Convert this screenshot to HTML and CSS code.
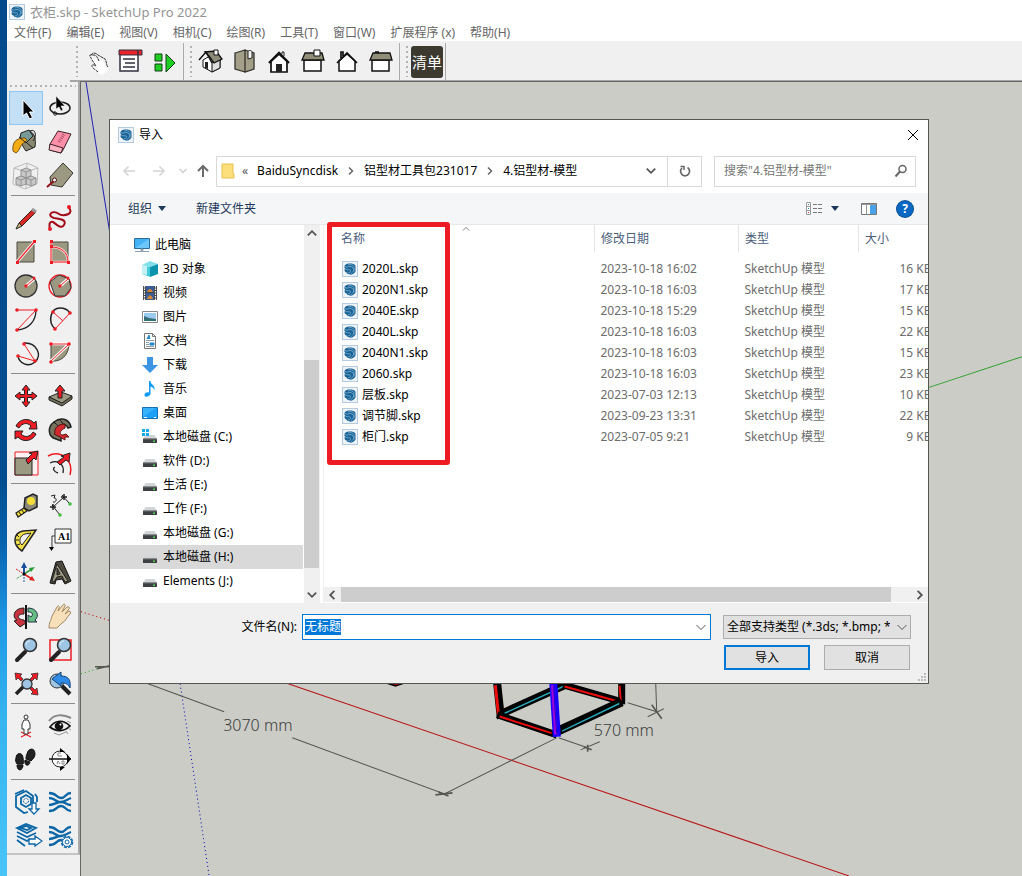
FILE: index.html
```html
<!DOCTYPE html>
<html lang="zh-CN">
<head>
<meta charset="utf-8">
<title>衣柜.skp - SketchUp Pro 2022</title>
<link rel="stylesheet" href="styles.css">
</head>
<body>
<svg class="sprite" aria-hidden="true">
  <symbol id="skp" viewBox="0 0 16 16">
    <rect x=".5" y=".5" width="15" height="15" fill="#eef3f8" stroke="#b5cbdf"/>
    <path d="M2.500 5C3 3 6 2.500 8 2.500s5 .5 5.500 2.500v5.500c-1 2-3 3-5 3.300C7 13 5 13 4.500 11.500 3 11 2.500 10 2.500 8.500l1-.5-1-1z" fill="#1a6396"/>
    <path d="M3 5.500c3 2 4-1.500 7 .5s1.500 5-1.500 7M3.500 8.200c3 1.600 4.500-.4 5 1.300s-1 2-2.500 2.500M6 4c2-.8 5-.6 6 1.500v5" fill="none" stroke="#7fb2d3" stroke-width=".8"/>
  </symbol>
  <symbol id="drive" viewBox="0 0 16 16">
    <path d="M3.500 6h9l2.500 4H1z" fill="#d3d6d8"/><rect x="1" y="9.500" width="14" height="4.500" rx=".6" fill="#3d4042"/><path d="M1 9.800h14" stroke="#8a8c8e"/><rect x="11" y="11.500" width="2" height="1.300" fill="#5be35b"/>
  </symbol>
  <symbol id="chev" viewBox="0 0 10 10"><path d="M1.500 3 5 6.500 8.500 3" fill="none" stroke="currentColor" stroke-width="1.500"/></symbol>
  <symbol id="thin" viewBox="0 0 12 12"><path d="m1.500 4 4.500 4.500L10.500 4" fill="none" stroke="currentColor"/></symbol>
</svg>

<div class="desktop">
<div class="app">
  <header class="titlebar"><svg class="i16"><use href="#skp"/></svg><span>衣柜.skp - SketchUp Pro 2022</span></header>
  <nav class="menubar">
    <button>文件(F)</button><button>编辑(E)</button><button>视图(V)</button><button>相机(C)</button><button>绘图(R)</button><button>工具(T)</button><button>窗口(W)</button><button>扩展程序 (x)</button><button>帮助(H)</button>
  </nav>

  <div class="toolbar">
    <div class="toolgroup">
      <i class="grip"></i>
      <button class="tool" aria-label="手势"><svg viewBox="0 0 34 34"><path d="m15 27-4-3c-2-2-1-4 1-3l2 1-4-9c-1-3 1-3 2-1l3 5-1-3c1-2 3-1 3 1 1-2 3-1 3 1 1-1 3 0 3 2l4 7-6 5z" fill="#fff"/><path d="m17 27-5-4c-2-2-1-4 1-3l2 1-4-6c-1-3-3-4-2-5l5 0c2 1 3 4 4 6M10 10c2-3 5-2 7 0l7 4c2 3 1 6 3 8" fill="none" stroke="#333" stroke-dasharray="3 .6"/></svg></button>
      <button class="tool" aria-label="清单窗口"><svg viewBox="0 0 34 34"><rect x="5" y="6" width="18" height="20" fill="#fff" stroke="#32303e" stroke-width="1.500"/><path d="M4 5h23v5H4z" fill="#e8232b" stroke="#32303e"/><path d="M23 5v5M8 14h12M10 18h10M8 22h12" stroke="#32303e" stroke-width="1.500"/></svg></button>
      <button class="tool" aria-label="运行"><svg viewBox="0 0 34 34"><path d="M6 9h7v7H6zM6 19h7v7H6zM17 9l9 9-9 9z" fill="#1fce23" stroke="#14401a"/></svg></button>
    </div>
    <div class="toolgroup">
      <i class="grip"></i>
      <button class="tool" aria-label="等轴"><svg viewBox="0 0 34 34"><path d="M8 15v7l9 5 8-4v-9l-5-6z" fill="#fff" stroke="#111"/><path d="m17 17 8-3v9l-8 4z" fill="#ddd" stroke="#111"/><path d="m10 7 11-1 6 8-8 4-5-7z" fill="#8d8a77" stroke="#111" stroke-width="1.300"/><path d="m4 15 7-8 6 11" fill="none" stroke="#111" stroke-width="1.500"/><path d="M19 5h4v5h-4z" fill="#fff" stroke="#111"/><path d="M10 17h3v7l-3-1z" fill="#222"/></svg></button>
      <button class="tool" aria-label="俯视图"><svg viewBox="0 0 34 34"><path d="m6 8 10-3v22L6 24zM16 5l9 3v16l-9 3z" fill="#a39f89" stroke="#34332b" stroke-width="1.300"/><path d="M19 7c0-2 4-2 4 0v6l-4 1z" fill="#f4f4f4" stroke="#222"/></svg></button>
      <button class="tool" aria-label="前视图"><svg viewBox="0 0 34 34"><path d="M8 16v11h16V16l-8-7z" fill="#fff" stroke="#111" stroke-width="1.700"/><path d="M6 18 16 8l10 10" fill="none" stroke="#111" stroke-width="2.300"/><path d="M13 19h6v8h-6z" fill="#222"/><path d="M19 9V7h2v4" fill="none" stroke="#222"/></svg></button>
      <button class="tool" aria-label="右视图"><svg viewBox="0 0 34 34"><path d="M7 15h17v11H7z" fill="#fff" stroke="#111" stroke-width="1.500"/><path d="M8 8h17l2 7H5z" fill="#908d79" stroke="#111" stroke-width="1.300"/><path d="M17 5h6v6h-6z" fill="#fff" stroke="#111"/></svg></button>
      <button class="tool" aria-label="后视图"><svg viewBox="0 0 34 34"><path d="M8 16v10h16V16l-8-7z" fill="#fff" stroke="#111" stroke-width="1.500"/><path d="M6 18 16 8l10 10M10 13V7h2v4" fill="none" stroke="#111" stroke-width="1.700"/></svg></button>
      <button class="tool" aria-label="左视图"><svg viewBox="0 0 34 34"><path d="M7 15h17v11H7z" fill="#fff" stroke="#111" stroke-width="1.500"/><path d="M8 8h17l2 7H5zM10 7h4" fill="#908d79" stroke="#111" stroke-width="1.300"/></svg></button>
    </div>
    <div class="toolgroup last"><i class="grip"></i><button class="listbtn">清单</button></div>
  </div>

  <div class="workspace">
    <aside class="palette">
      <i class="hgrip"></i>
      <div class="tools">
        <button class="tool active" aria-label="选择"><svg viewBox="0 0 34 34"><path d="M14 9v16l3.500-3 3 6 3-1.500-3-5.500H25z" fill="#000" stroke="#fff"/></svg></button>
        <button class="tool" aria-label="套索"><svg viewBox="0 0 34 34"><ellipse cx="17" cy="17" rx="10" ry="6" fill="none" stroke="#222" stroke-width="1.500"/><path d="M10 22c3-3 5 1 3 2s-4-2-1-3" fill="none" stroke="#222"/><path d="M13 5v13l3-2 2 4 2-1-2-4h4z" fill="#000" stroke="#eee" stroke-width=".6"/></svg></button>
        <button class="tool" aria-label="材质"><svg viewBox="0 0 34 34"><path d="m12 9 9-3c5 3 6 8 5 16l-9 4c-4-5-6-11-5-17z" fill="#8a8873" stroke="#222"/><path d="m12 8 8-3 4 6-7 7-6-5z" fill="#779997" stroke="#222"/><path d="M21 6c6-3 7 6 3 10" fill="none" stroke="#222"/><path d="M4 26c-1-9 3-13 12-13 2 1 2 3 0 4-5 2-5 9-9 11z" fill="#f4ac16" stroke="#7a5510"/><path d="m18 18 6 5M10 12l6 5" stroke="#222"/></svg></button>
        <button class="tool" aria-label="擦除"><svg viewBox="0 0 34 34"><path d="m7 19 8-13 13 3-8 16-2 3-11-3z" fill="#ff8fa8" stroke="#382027"/><path d="m7 19 13 4-2 5-12-3z" fill="#ffb4c4" stroke="#382027"/><path d="m16 17 5-8" stroke="#a8566b" stroke-width="3" stroke-dasharray="1 1"/></svg></button>
        <button class="tool" aria-label="组件"><svg viewBox="0 0 34 34"><path d="m5 9 13-5 11 5-1 16-12 5-12-5zM5 9l12 4 12-4M17 13v17M18 4v16" fill="none" stroke="#bbb"/><g fill="#c8c8c8" stroke="#949494"><path d="m12 11 5-2 5 2v6l-5 2-5-2zM7 19l5-2 5 2v6l-5 2-5-2zM17 19l5-2 5 2v6l-5 2-5-2z"/><path d="m12 11 5 2 5-2M17 13v5M7 19l5 2 5-2M12 21v6M17 19l5 2 5-2M22 21v6" fill="none"/></g></svg></button>
        <button class="tool" aria-label="标记"><svg viewBox="0 0 34 34"><path d="m7 18 13-14 10 10-11 14-11-2z" fill="#9c9983" stroke="#3a382e"/><path d="m4 28 8-7" stroke="#8f1018" stroke-width="2"/><circle cx="11.500" cy="21" r="2" fill="#fff" stroke="#5a1015"/></svg></button>
      </div>
      <hr>
      <div class="tools">
        <button class="tool" aria-label="直线"><svg viewBox="0 0 34 34"><path d="m10 22 14-14 3 3-14 14z" fill="#d52a24" stroke="#372320"/><path d="m23 8 4 3" stroke="#999" stroke-width="3"/><path d="m10 22 3 3-6 3z" fill="#cdb77b" stroke="#222"/></svg></button>
        <button class="tool" aria-label="手绘线"><svg viewBox="0 0 34 34"><path d="M25 6c8 7-5 10-9 7C9 8 3 15 11 17c7 1 13 2 10 7s-9-2-11-3c-4-1-4 3-3 7" fill="none" stroke="#a30c19" stroke-width="2"/><circle cx="26" cy="6" r="2" fill="#ed1c24"/><circle cx="7" cy="28" r="2" fill="#ed1c24"/></svg></button>
        <button class="tool" aria-label="矩形"><svg viewBox="0 0 34 34"><path d="M8 7h17v20H8z" fill="#9c9983" stroke="#4b493d"/><path d="M8 27 25 7" stroke="#fff" stroke-width="3"/><path d="M8 27 25 7" stroke="#ed1c24" stroke-width="1.300"/><path d="M7 26h3v3H7zM24 5h3v3h-3z" fill="#ed1c24"/></svg></button>
        <button class="tool" aria-label="旋转矩形"><svg viewBox="0 0 34 34"><path d="M8 7h17v20H8z" fill="#9c9983" stroke="#4b493d"/><path d="M8 12c10 0 17 5 17 15H8V6" fill="none" stroke="#ffd9d9" stroke-width="2.500"/><path d="M8 12c10 0 17 5 17 15H8V6" fill="none" stroke="#ed1c24"/><path d="M7 5h3v3H7zM7 10h3v3H7zM7 26h3v3H7zM24 26h3v3h-3z" fill="#ed1c24"/></svg></button>
        <button class="tool" aria-label="圆"><svg viewBox="0 0 34 34"><circle cx="17" cy="17" r="11" fill="#9c9983" stroke="#333" stroke-width="1.300"/><path d="m17 17 8-7" stroke="#fff" stroke-width="3"/><path d="m17 17 8-7" stroke="#ed1c24"/><circle cx="17" cy="17" r="1.700" fill="#ed1c24"/><circle cx="25" cy="9" r="1.500" fill="#ed1c24"/></svg></button>
        <button class="tool" aria-label="多边形"><svg viewBox="0 0 34 34"><circle cx="17" cy="17" r="11" fill="none" stroke="#ed1c24" stroke-width="1.300"/><path d="m7 13 9-7 10 4 2 9-6 8H12z" fill="#9c9983" stroke="#333"/><path d="m17 17 8-7" stroke="#fff" stroke-width="3"/><path d="m17 17 8-7" stroke="#ed1c24"/><circle cx="17" cy="17" r="1.700" fill="#ed1c24"/><circle cx="25" cy="9" r="1.500" fill="#ed1c24"/></svg></button>
        <button class="tool" aria-label="圆弧"><svg viewBox="0 0 34 34"><path d="M27 7c0 11-7 19-19 20" fill="none" stroke="#222" stroke-width="1.300"/><path d="M8 7h19L8 27" fill="none" stroke="#ed1c24"/><g fill="#ed1c24"><circle cx="8" cy="7" r="1.800"/><circle cx="27" cy="7" r="1.800"/><circle cx="8" cy="27" r="1.800"/></g></svg></button>
        <button class="tool" aria-label="两点圆弧"><svg viewBox="0 0 34 34"><path d="M12 26C4 18 8 5 17 5c5 0 8 2 10 5" fill="none" stroke="#222" stroke-width="1.500"/><path d="m12 26 15-16M10 9l10 9" stroke="#ed1c24"/><g fill="#ed1c24"><circle cx="12" cy="26" r="1.800"/><circle cx="27" cy="10" r="1.800"/><circle cx="10" cy="9" r="1.800"/></g></svg></button>
        <button class="tool" aria-label="三点圆弧"><svg viewBox="0 0 34 34"><path d="M15 6c12-1 19 12 11 19-7 6-16 1-17-6" fill="none" stroke="#222" stroke-width="1.500"/><path d="m15 7 11 17-17-5" fill="none" stroke="#ed1c24"/><g fill="#ed1c24"><circle cx="15" cy="7" r="1.800"/><circle cx="26" cy="24" r="1.800"/><circle cx="9" cy="19" r="1.800"/></g></svg></button>
        <button class="tool" aria-label="扇形"><svg viewBox="0 0 34 34"><path d="M8 8h18c-1 11-8 17-18 16z" fill="#9c9983" stroke="#4b493d"/><path d="M8 7h18L8 24" fill="none" stroke="#fff" stroke-width="3"/><path d="M8 7h18L8 24" fill="none" stroke="#ed1c24"/><g fill="#ed1c24"><circle cx="8" cy="7" r="1.800"/><circle cx="26" cy="7" r="1.800"/><circle cx="8" cy="25" r="1.800"/></g></svg></button>
      </div>
      <hr>
      <div class="tools">
        <button class="tool" aria-label="移动"><svg viewBox="0 0 34 34"><path d="m17 6 4 5h-2.500v4.500H23V13l5 4-5 4v-2.500h-4.500V23H21l-4 5-4-5h2.500v-4.500H11V21l-5-4 5-4v2.500h4.500V11H13z" fill="#ed1c24" stroke="#222"/></svg></button>
        <button class="tool" aria-label="推拉"><svg viewBox="0 0 34 34"><path d="m6 18 12-5 11 4-10 8z" fill="#9c9983" stroke="#222"/><path d="m6 18 13 6 10-7v3l-10 7-13-6z" fill="#6f6c59" stroke="#222"/><path d="m17 6 5 6h-3v7h-4v-7h-3z" fill="#ed1c24" stroke="#222"/></svg></button>
        <button class="tool" aria-label="旋转"><svg viewBox="0 0 34 34"><path d="M7 13c3-7 13-9 18-3l2-2 1 8-8 0 2-3c-4-4-9-3-12 2zM27 21c-3 7-13 9-18 3l-3 2V18h8l-2 3c4 4 9 3 12-2z" fill="#ed1c24" stroke="#222"/></svg></button>
        <button class="tool" aria-label="路径跟随"><svg viewBox="0 0 34 34"><path d="M28 14C26 5 17 4 11 9c-7 5-6 15 2 17l5 2v-5c-7 0-7-6-2-10 4-3 8-1 9 2z" fill="#76745f" stroke="#222" stroke-width="1.500"/><path d="M10 9c3 1 5 4 6 5M16 6c2 2 4 4 4 6" stroke="#111" fill="none"/><path d="M22 11c-7 0-11 4-10 9l-1 1 6 3 5 3v-3h4l-3-3-3 1c-4 0-4-4 2-7z" fill="#d62a2f" stroke="#5a1717"/></svg></button>
        <button class="tool" aria-label="缩放"><svg viewBox="0 0 34 34"><path d="M6 5h23v23H6z" fill="#fff1f1" stroke="#ed1c24"/><path d="M6 11h17v17H6z" fill="#9c9983" stroke="#222"/><path d="m17 13 6-6-3-1 9-2-2 9-2-2-6 6z" fill="#ed1c24" stroke="#222"/></svg></button>
        <button class="tool" aria-label="偏移"><svg viewBox="0 0 34 34"><path d="M5 9c13-7 26 5 22 19" fill="none" stroke="#ed1c24" stroke-width="1.500"/><path d="M7 16c8-4 15 2 13 10M12 20c-3 1-1 5 3 6" fill="none" stroke="#222" stroke-width="1.300"/><path d="m14 15 7-5-3-1 9-3-1 9-3-2-6 5z" fill="#ed1c24" stroke="#222"/></svg></button>
      </div>
      <hr>
      <div class="tools">
        <button class="tool" aria-label="卷尺"><svg viewBox="0 0 34 34"><path d="m16 9 8-4 4 2v11l-8 4-5-3z" fill="#8a8878" stroke="#222" stroke-width="1.500"/><circle cx="22" cy="12" r="4" fill="#f2dc35"/><path d="m7 24 8-5 3 3-9 6z" fill="#f2dc35" stroke="#222" stroke-width="1.300"/><path d="m10 23 2 3m1-5 2 3" stroke="#222"/></svg></button>
        <button class="tool" aria-label="尺寸"><svg viewBox="0 0 34 34"><path d="m10 18 11-10M9 16l8 10M19 6l7 8" stroke="#222"/><path d="M7 18h6M10 15v6M18 8h6M21 5v6" stroke="#222" stroke-width="1.500"/><circle cx="17" cy="26" r="1.700" fill="#42bb3a"/><circle cx="27" cy="15" r="1.700" fill="#42bb3a"/><path d="m8 7 4-1-1 3c4 0 2 5-1 4" fill="none" stroke="#222"/></svg></button>
        <button class="tool" aria-label="量角器"><svg viewBox="0 0 34 34"><path d="M13 28C3 22 4 10 14 8l13-1z" fill="#f1df48" stroke="#222" stroke-width="1.500"/><path d="M13 22c-4-3-2-10 3-11l6-1z" fill="#f0f0f0" stroke="#222"/><path d="m8 12 2 2M7 17h3M8 22l3-1" stroke="#222"/></svg></button>
        <button class="tool" aria-label="文字"><svg viewBox="0 0 34 34"><path d="M12 6h16v14H12zM12 13H9v13" fill="#fff" stroke="#333"/><path d="m6 24h5l-2.500 4z"/><text x="15" y="17" class="serif">A1</text></svg></button>
        <button class="tool" aria-label="轴"><svg viewBox="0 0 34 34"><path d="m15 17-8 5" stroke="#3b9a44" stroke-dasharray="2 1"/><path d="m15 17 8-5" stroke="#3b9a44" stroke-width="1.500"/><path d="m7 12 8 5" stroke="#d22" stroke-dasharray="2 1"/><path d="m15 17 8 5" stroke="#d22" stroke-width="1.500"/><path d="M15 17V8" stroke="#1c4f9c" stroke-width="2"/><path d="M15 17v9" stroke="#8aa6cf" stroke-dasharray="2 1" stroke-width="2"/><path d="m15 5 3 6h-6z" fill="#1c4f9c"/><path d="m26 10-6 1 2 4z" fill="#2b9a34"/><path d="m26 24-6-1 3-4z" fill="#d22"/><circle cx="15" cy="17" r="1.500"/></svg></button>
        <button class="tool" aria-label="三维文字"><svg viewBox="0 0 34 34"><path d="m13 5 6-1 9 20-6 3-3-5-6 1-1 4-5-1z" fill="#4d4a41" stroke="#111"/><path d="m14 7-5 17 2 1 3-5 5-1 3 6 3-1zM14 11l3 6-3 1z" fill="#9c9983" stroke="#222" fill-rule="evenodd"/></svg></button>
      </div>
      <hr>
      <div class="tools">
        <button class="tool" aria-label="环绕观察"><svg viewBox="0 0 34 34"><path d="M15 9C4 9 3 19 8 21l-3 1 6 6 6-4-2-3c-8-1-7-6 0-6z" fill="#c7343f" stroke="#222"/><path d="M19 9c9 0 12 8 7 12l2 2h-9v-7l3 2c3-3 1-5-3-5z" fill="#67bd83" stroke="#234"/><path d="M17 6v24" stroke="#111" stroke-width="2"/></svg></button>
        <button class="tool" aria-label="平移"><svg viewBox="0 0 34 34"><path d="M6 29c0-6 2-7 3-12l5-9c1-2 3-1 2 1l-1 3 5-6c1-2 3 0 2 1l-3 6 5-5c2-1 3 1 2 2l-4 5 4-3c2 0 2 2 1 3-4 4-4 7-8 9l-5 5z" fill="#f7dfba" stroke="#a08a64"/></svg></button>
        <button class="tool" aria-label="缩放视图"><svg viewBox="0 0 34 34"><path d="m8 27 8-8" stroke="#222" stroke-width="4" stroke-linecap="round"/><circle cx="21" cy="12" r="6.500" fill="#9fc5e4" stroke="#333" stroke-width="1.500"/><path d="M17 12c0-3 2-4 4-4" stroke="#e4f2fb" fill="none"/></svg></button>
        <button class="tool" aria-label="缩放窗口"><svg viewBox="0 0 34 34"><path d="M7 7h21v20H7z" fill="none" stroke="#ed1c24" stroke-width="1.500"/><path d="m8 27 8-8" stroke="#222" stroke-width="4" stroke-linecap="round"/><circle cx="21" cy="12" r="6.500" fill="#9fc5e4" stroke="#333" stroke-width="1.500"/><path d="M17 12c0-3 2-4 4-4" stroke="#e4f2fb" fill="none"/></svg></button>
        <button class="tool" aria-label="充满视窗"><svg viewBox="0 0 34 34"><path d="m7 27 8-8" stroke="#222" stroke-width="3.500"/><circle cx="18" cy="17" r="5" fill="#9fc5e4" stroke="#333" stroke-width="1.300"/><g fill="#ed1c24" stroke="#222" stroke-width=".7"><path d="m6 6 7 1-2 2 3 3-2 2-3-3-2 2zM29 6l-7 1 2 2-3 3 2 2 3-3 2 2zM29 28l-7-1 2-2-3-3 2-2 3 3 2-2z"/></g></svg></button>
        <button class="tool" aria-label="上一个"><svg viewBox="0 0 34 34"><circle cx="14" cy="14" r="7" fill="#9fc5e4" stroke="#333"/><path d="m19 19 8 8" stroke="#222" stroke-width="4"/><path d="m9 12 9-7v4c7 0 10 3 9 12-2-4-4-5-9-5v3z" fill="#2f8be6" stroke="#174375"/></svg></button>
      </div>
      <hr>
      <div class="tools">
        <button class="tool" aria-label="定位相机"><svg viewBox="0 0 34 34"><path d="m12 28 10-5M12 23l10 5" stroke="#ed1c24" stroke-width="1.200"/><circle cx="17" cy="8" r="2" fill="#fff" stroke="#333"/><path d="M15 11h4l2 4v5h-2v5h-4v-5h-2v-5z" fill="#fff" stroke="#333"/></svg></button>
        <button class="tool" aria-label="绕轴旋转"><svg viewBox="0 0 34 34"><path d="M6 12c5-7 14-7 22-3" fill="none" stroke="#888" stroke-width="2"/><path d="M7 18c6-8 14-7 20-1-6 6-14 6-20 1z" fill="#eee" stroke="#111" stroke-width="1.700"/><circle cx="16" cy="17" r="4.300" fill="#111"/><circle cx="17.500" cy="15.500" r="1" fill="#fff"/><path d="m11 24 5 2 7-3M24 12l4 2m-3 5 3 2m-5 1 2 3" stroke="#999" fill="none"/></svg></button>
        <button class="tool" aria-label="漫游"><svg viewBox="0 0 34 34"><path d="M7 15c0-6 7-6 7 0 1 4 1 5 0 6H8c-1-2-2-3-1-6zM18 11c1-6 8-7 8 0 0 3-2 5-4 7l-5-2c0-2 0-3 1-5zM8 22h6c0 6-6 7-6 0zM16 17l5 2c-1 5-6 4-5-2z" fill="#222" stroke="#111"/></svg></button>
        <button class="tool" aria-label="剖切面"><svg viewBox="0 0 34 34"><circle cx="17" cy="16" r="8" fill="#fff" stroke="#222"/><path d="M6 16h22" stroke="#111" stroke-width="1.500"/><path d="m17 5 5 4h-5zM28 16l-4-5v10zM17 28l5-4h-5z"/><path d="M18 10h-3v3h4m-5 8 1-3 2 3m2 0v-3h2v3z" fill="none" stroke="#888"/></svg></button>
      </div>
      <hr>
      <div class="tools">
        <button class="tool" aria-label="3D Warehouse"><svg viewBox="0 0 34 34"><g fill="none" stroke="#0b66a6" stroke-width="1.800"><path d="M24 18v-7l-7-5-10 5v11l8 6 4-1M6 9l9-4M26 9l2 3v5"/><path d="m12 13 5-3 5 3v6l-5 3-5-3z"/></g><circle cx="17" cy="16" r="2.500" fill="none" stroke="#0b66a6" stroke-dasharray="2 1"/><path d="M23 18h4v6h3l-5 5-5-5h3z" fill="#fff" stroke="#0b66a6" stroke-width="1.300"/></svg></button>
        <button class="tool" aria-label="扩展库"><svg viewBox="0 0 34 34"><path d="M6 8c8 0 7 5 12 5s4-5 10-5M6 13c7 0 7 5 12 4s5-2 10-4M6 20c6 0 7-3 12-3s5 3 10 3M6 26c8 0 7-5 12-5s4 5 10 5" fill="none" stroke="#0b66a6" stroke-width="2.300"/></svg></button>
        <button class="tool" aria-label="LayOut"><svg viewBox="0 0 34 34"><path d="m8 9 9-4 10 4-9 5zM8 13l10 5 9-4M8 17l10 5 3-2M8 21l8 6M12 9l5-2 5 2-4 2z" fill="none" stroke="#0b66a6" stroke-width="1.800"/><path d="M20 20h6v-3l7 5-7 5v-2h-6z" fill="#fff" stroke="#0b66a6" stroke-width="1.300"/></svg></button>
        <button class="tool" aria-label="扩展管理器"><svg viewBox="0 0 34 34"><path d="M6 8c8 0 7 5 12 5s4-5 10-5M6 13c7 0 7 5 12 4s5-2 10-4M6 20c6 0 7-3 12-3M6 26c8 0 7-5 12-5" fill="none" stroke="#0b66a6" stroke-width="2.300"/><circle cx="24" cy="23" r="5.500" fill="#fff" stroke="#0b66a6" stroke-width="1.500" stroke-dasharray="3 1.300"/><circle cx="24" cy="23" r="4.500" fill="#fff" stroke="#0b66a6"/><circle cx="24" cy="23" r="2" fill="none" stroke="#0b66a6"/></svg></button>
      </div>
    </aside>

    <main class="viewport">
      <svg class="scene" viewBox="81 83 941 793" preserveAspectRatio="xMinYMin slice">
        <g fill="none">
          <path d="m86 83 24 152" stroke="#2222b8"/>
          <path d="m180 684 29 192" stroke="#0000b8" stroke-dasharray="1 3"/>
          <path d="m928 388 94-31" stroke="#2b9e2b"/>
          <path d="m81 674 29-9" stroke="#22a022" stroke-dasharray="1 3"/>
          <path d="m81 612 29 9" stroke="#c00000" stroke-dasharray="1 3"/>
          <path d="m288 684 560 192" stroke="#b81414"/>
          <g stroke="#555552">
            <path d="m148 684 76 28M292 738l152 56 112-56M558 738l29 10M580 750l19-8M627 703l29 9M655 684l1 28M647 717l16-8" />
            <path d="m435 795 17-2M438 792l10 4M95 667h15M97 669l13-3M587 745v7M583 747l8 3M651 705l10 14" stroke-width="1.600"/>
          </g>
        </g>
        <path d="M386 684h18l-9 3z"/><path d="m392 684 6 1" stroke="#a00"/>
        <g fill="none" stroke-linecap="square">
          <path d="m505 712 60-27" stroke="#000" stroke-width="8"/><path d="m503 714 59-27" stroke="#28a9ba" stroke-width="1.500"/>
          <path d="m566 686 52 15" stroke="#000" stroke-width="7"/><path d="m565 687 50 14" stroke="#ed0c0c" stroke-width="2"/>
          <path d="m497 687 3 28" stroke="#000" stroke-width="8"/><path d="m495 687 3 28" stroke="#ed0c0c" stroke-width="3"/>
          <path d="m621 687v14" stroke="#000" stroke-width="7"/><path d="m619 687 1 13" stroke="#ed0c0c" stroke-width="2"/>
          <path d="m500 716 53 18" stroke="#000" stroke-width="7"/><path d="m500 717 50 16" stroke="#ed0c0c" stroke-width="2"/>
          <path d="m560 730 57-26" stroke="#000" stroke-width="9"/><path d="m562 731 56-27" stroke="#28a9ba" stroke-width="1.500"/>
          <path d="m553 687 3 46" stroke="#1800ff" stroke-width="8"/><path d="m552 687 3 46" stroke="#a000d8" stroke-width="3"/><path d="m553 687 3 46" stroke="#2000d0" stroke-width="1"/>
        </g>
        <text x="223" y="731">3070 mm</text><text x="593" y="736">570 mm</text>
      </svg>

      <section class="dialog" role="dialog" aria-label="导入">
        <header class="dialog-title"><svg class="i16"><use href="#skp"/></svg><span>导入</span>
          <button class="close" aria-label="关闭"><svg viewBox="0 0 12 12"><path d="m1 1 10 10M11 1 1 11" stroke="#000"/></svg></button></header>
        <div class="nav">
          <button class="arrow" aria-label="后退"><svg viewBox="0 0 14 14"><path d="M13 7H2M6.500 2.500 2 7l4.500 4.500" fill="none" stroke="#d4d4d4" stroke-width="1.600"/></svg></button>
          <button class="arrow" aria-label="前进"><svg viewBox="0 0 14 14"><path d="M1 7h11M7.500 2.500 12 7l-4.500 4.500" fill="none" stroke="#d4d4d4" stroke-width="1.600"/></svg></button>
          <button class="recent" aria-label="最近位置"><svg class="i10"><use href="#chev"/></svg></button>
          <button class="up" aria-label="向上"><svg viewBox="0 0 14 14"><path d="M7 13V2M2 7l5-5 5 5" fill="none" stroke="#6b6b6b" stroke-width="2"/></svg></button>
          <div class="address">
            <svg class="i16" viewBox="0 0 16 16"><path d="M2 1h11v10h1v4H2z" fill="#fcdf7a" stroke="#e9bf4f"/></svg>
            <span class="sep">«</span><button>BaiduSyncdisk</button><svg class="i10 right"><use href="#chev"/></svg><button>铝型材工具包231017</button><svg class="i10 right"><use href="#chev"/></svg><button>4.铝型材-模型</button>
            <button class="drop" aria-label="历史"><svg class="i12"><use href="#chev"/></svg></button>
            <button class="refresh" aria-label="刷新"><svg viewBox="0 0 14 14"><path d="M9.500 3.500A4.500 4.500 0 1 1 4 4" fill="none" stroke="#666" stroke-width="1.700"/><path d="M2.500 2.500H6V6" fill="none" stroke="#666" stroke-width="1.500"/></svg></button>
          </div>
          <label class="search"><input type="text" aria-label="搜索" placeholder='搜索"4.铝型材-模型"'><svg viewBox="0 0 14 14"><circle cx="8.500" cy="5" r="3.500" fill="none" stroke="#666" stroke-width="1.500"/><path d="m6 7.500-4.500 5" stroke="#666" stroke-width="2"/></svg></label>
        </div>
        <div class="commands">
          <button>组织 <i class="tri"></i></button><button>新建文件夹</button>
          <button class="views" aria-label="视图"><svg width="18" height="14" viewBox="0 0 18 14"><path d="M1.500.5h4v12h-4zM1.500 4.500h4M1.500 8.500h4" fill="#fff" stroke="#9a9a9a"/><path d="M8 2.500h4M13 2.500h4M8 6.500h4M13 6.500h4M8 10.500h4M13 10.500h4" stroke="#777"/><path d="M3 2h1v1H3zM3 6h1v1H3z" fill="#38a"/><path d="M3 10h1v1H3z" fill="#d33"/></svg><i class="tri"></i></button>
          <button aria-label="预览窗格"><svg width="16" height="12" viewBox="0 0 16 12"><path d="M.5.500h15v11H.5z" fill="#fff" stroke="#777"/><path d="M1 1.500h14" stroke="#999"/><path d="M9 2h6v9H9z" fill="#4aa3e8"/><path d="M5.500 2v9" stroke="#999"/></svg></button>
          <button class="help" aria-label="帮助">?</button>
        </div>

        <div class="browser">
          <ul class="tree">
            <li class="root"><svg class="i16" viewBox="0 0 16 16"><path d="M.5 1.500h15v10H.5z" fill="#44b0f5" stroke="#2b6c9b"/><path d="m1 11 14-9v9z" fill="#6cc6fa"/><path d="M7 12h2v1.500H7zM1 14.500h14" stroke="#8ea2b1" fill="#8ea2b1"/></svg>此电脑</li>
            <li><svg class="i16" viewBox="0 0 16 16"><path d="m0 4 8-4 8 3-8 3z" fill="#7fe0ea"/><path d="M0 4l8 2v10l-8-3z" fill="#45cad9"/><path d="m8 6 8-3v10l-8 3z" fill="#0a93ad"/><path d="m0 4 5 1v9l-5-1z" fill="#c5f1f5"/></svg>3D 对象</li>
            <li><svg class="i16" viewBox="0 0 16 16"><path d="M1 1h14v14H1z" fill="#444"/><path d="M4 1h8v6H4z" fill="#3a5c98"/><path d="M4 8h8v7H4z" fill="#3a5c98"/><path d="M5 7c2-4 4-4 6 0zM5 14c2-5 4-5 6 0z" fill="#d98832"/><path d="M2.500 1v14M13.500 1v14" stroke="#fff" stroke-width="1.200" stroke-dasharray="1.500 1"/></svg>视频</li>
            <li><svg class="i16" viewBox="0 0 16 16"><path d="M.5 2.500h15v11H.5z" fill="#fff" stroke="#888"/><path d="M2 4h12v8H2z" fill="#9ccbef"/><path d="m2 7 5 2 7 1v2H2z" fill="#356f78"/></svg>图片</li>
            <li><svg class="i16" viewBox="0 0 16 16"><path d="M2.500.5h8l3 3v12h-11z" fill="#fff" stroke="#777"/><path d="M10.500.5v3h3" fill="none" stroke="#777"/><path d="M4 7.500h8M4 9.500h3M4 11.500h3M4 13.500h8" stroke="#8d9aa7"/><path d="m5 6 2-4 1 4M8 10h4v2H8z" fill="#2488ce" stroke="#2488ce"/></svg>文档</li>
            <li><svg class="i16" viewBox="0 0 16 16"><path d="M5 0h6v8h5l-8 8-8-8h5z" fill="#3c96e4"/></svg>下载</li>
            <li><svg class="i16" viewBox="0 0 16 16"><path d="M7 0h1.500c0 4 5 4 4 9-1-2-2-3-4-3.500V13c-1 3-6 4-6 1 0-2 2-3 4.500-2.500z" fill="#109bf4"/></svg>音乐</li>
            <li><svg class="i16" viewBox="0 0 16 16"><path d="M.5 2.500h15v11H.5z" fill="#1ba1f7" stroke="#1472b0"/><path d="m1 12 13-9H1z" fill="#38b2fb"/><path d="M2 12.500h3M12 12.500h2" stroke="#fff"/></svg>桌面</li>
            <li><svg class="i16" viewBox="0 0 16 16"><use href="#drive"/><path d="M0 0h3v3H0zM4 0h3v3H4zM0 4h3v3H0zM4 4h3v3H4z" fill="#15a9ee"/></svg>本地磁盘 (C:)</li>
            <li><svg class="i16"><use href="#drive"/></svg>软件 (D:)</li>
            <li><svg class="i16"><use href="#drive"/></svg>生活 (E:)</li>
            <li><svg class="i16"><use href="#drive"/></svg>工作 (F:)</li>
            <li><svg class="i16"><use href="#drive"/></svg>本地磁盘 (G:)</li>
            <li class="current"><svg class="i16"><use href="#drive"/></svg>本地磁盘 (H:)</li>
            <li><svg class="i16"><use href="#drive"/></svg>Elements (J:)</li>
          </ul>
          <div class="vscroll"><button aria-label="向上滚动"><svg class="i12 flip"><use href="#chev"/></svg></button><div class="vtrack"><i></i></div><button aria-label="向下滚动"><svg class="i12"><use href="#chev"/></svg></button></div>
          <div class="listing">
            <div class="files">
              <table>
                <colgroup><col><col class="c-date"><col class="c-type"><col class="c-size"></colgroup>
                <thead><tr><th>名称<svg class="sort" viewBox="0 0 10 10"><path d="m1 7 4-4 4 4" fill="none" stroke="#666"/></svg></th><th>修改日期</th><th>类型</th><th>大小</th></tr></thead>
                <tbody>
                  <tr><td><svg class="i16"><use href="#skp"/></svg>2020L.skp</td><td>2023-10-18 16:02</td><td>SketchUp 模型</td><td>16 KB</td></tr>
                  <tr><td><svg class="i16"><use href="#skp"/></svg>2020N1.skp</td><td>2023-10-18 16:03</td><td>SketchUp 模型</td><td>17 KB</td></tr>
                  <tr><td><svg class="i16"><use href="#skp"/></svg>2040E.skp</td><td>2023-10-18 15:29</td><td>SketchUp 模型</td><td>15 KB</td></tr>
                  <tr><td><svg class="i16"><use href="#skp"/></svg>2040L.skp</td><td>2023-10-18 16:03</td><td>SketchUp 模型</td><td>22 KB</td></tr>
                  <tr><td><svg class="i16"><use href="#skp"/></svg>2040N1.skp</td><td>2023-10-18 16:03</td><td>SketchUp 模型</td><td>15 KB</td></tr>
                  <tr><td><svg class="i16"><use href="#skp"/></svg>2060.skp</td><td>2023-10-18 16:03</td><td>SketchUp 模型</td><td>23 KB</td></tr>
                  <tr><td><svg class="i16"><use href="#skp"/></svg>层板.skp</td><td>2023-07-03 12:13</td><td>SketchUp 模型</td><td>10 KB</td></tr>
                  <tr><td><svg class="i16"><use href="#skp"/></svg>调节脚.skp</td><td>2023-09-23 13:31</td><td>SketchUp 模型</td><td>22 KB</td></tr>
                  <tr><td><svg class="i16"><use href="#skp"/></svg>柜门.skp</td><td>2023-07-05 9:21</td><td>SketchUp 模型</td><td>9 KB</td></tr>
                </tbody>
              </table>
            </div>
            <div class="hscroll"><button aria-label="向左滚动"><svg class="i12 left"><use href="#chev"/></svg></button><div class="htrack"><i></i></div><button aria-label="向右滚动"><svg class="i12 right"><use href="#chev"/></svg></button></div>
            <div class="highlight"></div>
          </div>
        </div>

        <footer class="footer">
          <div class="row">
            <label for="filename">文件名(N):</label>
            <div class="combo"><input id="filename" type="text" value="无标题"><button aria-label="展开"><svg class="i12"><use href="#thin"/></svg></button></div>
            <div class="filter"><select aria-label="文件类型"><option>全部支持类型 (*.3ds; *.bmp; *.dae)</option></select><svg class="i12"><use href="#thin"/></svg></div>
          </div>
          <div class="row actions"><button class="primary">导入</button><button>取消</button></div>
          <svg class="resize" viewBox="0 0 10 10"><path d="M7 0h2v2H7zM7 3h2v2H7zM7 6h2v2H7zM4 3h2v2H4zM4 6h2v2H4zM1 6h2v2H1z" fill="#bdbdbd"/></svg>
        </footer>
      </section>
    </main>
  </div>
</div>
</div>
<script src="app.js"></script>
</body>
</html>
```
FILE: styles.css
```css
* { box-sizing: border-box; }
html, body { margin: 0; height: 100%; }
body { font: 12px/16px "Noto Sans", "Noto Sans CJK SC", sans-serif; color: #000; overflow: hidden; }
button, input, select { font: inherit; color: inherit; margin: 0; }
button { background: none; border: 0; padding: 0; }
svg { display: block; flex: none; }
.sprite { position: absolute; width: 0; height: 0; }
.i16 { width: 16px; height: 16px; }
.i12 { width: 12px; height: 12px; color: #555; }
.i10 { width: 10px; height: 10px; color: #666; }
.flip { transform: rotate(180deg); }
.left { transform: rotate(90deg); }
.right { transform: rotate(-90deg); }

.desktop { min-height: 100vh; padding-left: 7px; display: flex; background: linear-gradient(#024a8c, #024d90 55%, #0763b0 62%, #1d98e6 71%, #35b4f0 82%, #48c4f7); }
.app { flex: 1; min-width: 0; display: flex; flex-direction: column; background: #f0f0f0; }
.titlebar { display: flex; align-items: center; gap: 5px; height: 23px; padding-left: 2px; background: #fff; color: #949494; font-size: 13px; }
.menubar { display: flex; gap: 15px; height: 18px; padding: 2px 0 0 7px; background: #fff; color: #666; align-items: center; white-space: nowrap; }

.toolbar { display: flex; height: 41px; margin-left: 63px; padding-top: 2px; border-bottom: 2px solid #a5a5a5; }
.toolgroup { display: flex; align-items: center; border-right: 1px solid #a9a9a9; padding-left: 4px; }
.last { padding-right: 2px; }
.grip { width: 3px; align-self: stretch; margin: 3px 2px; background: radial-gradient(circle at 1px 1px, #b4b4b4 1px, transparent 1px) 0 0 / 3px 5px; }
.tool { width: 34px; height: 34px; flex: none; }
.tool svg { width: 34px; height: 34px; }
.listbtn { width: 32px; height: 32px; border-radius: 3px; background: #3c3930; color: #fff; font-size: 15px; white-space: nowrap; }
.serif { font: 700 10px "Liberation Serif", serif; }

.workspace { flex: 1; display: flex; min-height: 0; }
.palette { width: 73px; flex: none; align-self: flex-start; padding: 3px 1px 0 2px; border-right: 2px solid #a9a9a9; border-bottom: 2px solid #c4c4c4; }
.hgrip { display: block; height: 3px; margin: 0 1px 3px; background: radial-gradient(circle at 1px 1px, #b4b4b4 1px, transparent 1px) 0 0 / 5px 3px; }
.tools { display: grid; grid-template-columns: 34px 34px; }
.active { background: #c3dff5; border: 1px solid #8cc6f5; display: grid; place-content: center; }
hr { height: 8px; margin: 0 2px; border: 0; background: linear-gradient(#8c8c8c, #8c8c8c) 0 2px / 100% 1px no-repeat; }

.viewport { flex: 1; position: relative; min-width: 0; margin-top: -1px; overflow: hidden; background: #cbccc6; border: solid #666; border-width: 1px 0 0 1px; }
.scene { width: 100%; height: 100%; font-size: 16px; font-weight: 300; }
.scene text { fill: #3c3c3c; }

.dialog { position: absolute; left: 28px; right: 93px; top: 37px; border: 1px solid #555; background: #fff; }
.dialog-title { display: flex; align-items: center; gap: 5px; height: 29px; padding: 0 8px; }
.close { margin-left: auto; padding: 1px; }
.close svg { width: 12px; height: 12px; }
.nav { display: flex; align-items: center; height: 44px; padding: 0 12px; }
.arrow svg, .up svg, .refresh svg, .search svg { width: 14px; height: 14px; }
.arrow { margin-right: 16px; }
.arrow + .arrow { margin-right: 12px; }
.recent { margin-right: 8px; }
.recent .i10 { color: #cfcfcf; }
.up { margin-right: 6px; }
.address { flex: 1; display: flex; align-items: center; height: 31px; border: 1px solid #d9d9d9; padding-left: 3px; white-space: nowrap; min-width: 0; }
.address .sep { margin: 0 9px 0 6px; color: #555; }
.address .i10 { margin: 0 8px; }
.address .drop { margin-left: auto; margin-right: 10px; }
.refresh { align-self: stretch; width: 34px; border-left: 1px solid #d9d9d9; display: grid; place-content: center; }
.search { width: 202px; height: 31px; margin-left: 12px; display: flex; align-items: center; border: 1px solid #d9d9d9; padding: 0 7px 0 9px; }
.search input { flex: 1; min-width: 0; border: 0; padding: 0; outline: 0; background: none; }
.search input::placeholder { color: #757575; }
.commands { display: flex; align-items: center; height: 32px; padding: 0 15px 0 18px; background: #f5f6f7; border-bottom: 1px solid #e7e8ea; color: #1e395b; }
.commands button { display: flex; align-items: center; gap: 6px; margin-right: 30px; }
.commands .views { margin: 0 22px 0 auto; gap: 8px; }
.commands .views + button { margin-right: 20px; }
.tri { border: 4px solid transparent; border-top: 5px solid #1e395b; border-bottom: 0; }
.commands .help { display: block; width: 16px; height: 16px; margin: 0; border-radius: 50%; background: #0a68c4; box-shadow: 0 0 0 1px #0b4f93; color: #fff; font-weight: 700; text-align: center; }

.browser { display: flex; height: 378px; }
.tree { width: 193px; flex: none; list-style: none; margin: 0; padding: 8px 0 0; }
.tree li { display: flex; align-items: center; gap: 5px; height: 24px; padding-left: 32px; }
.tree .root { padding-left: 24px; }
.tree .current { background: #d9d9d9; }
.vscroll { width: 16px; margin-left: 1px; display: flex; flex-direction: column; background: #f0f0f0; }
.vscroll button, .hscroll button { display: grid; place-content: center; width: 16px; height: 16px; flex: none; }
.vtrack, .htrack { flex: 1; display: flex; }
.vtrack { flex-direction: column; padding-right: 1px; }
.vtrack i { margin-top: auto; margin-bottom: 19px; height: 208px; background: #cdcdcd; }
.htrack i { flex: 1; margin: 0 21px 0 1px; background: #cdcdcd; }
.listing { position: relative; flex: 1; min-width: 0; margin-left: 3px; border-left: 1px solid #f0f0f0; display: flex; flex-direction: column; }
.files { flex: 1; overflow: hidden; }
table { width: calc(100% + 10px); table-layout: fixed; border-collapse: collapse; }
.c-date { width: 144px; }
.c-type { width: 120px; }
.c-size { width: 79px; }
th { height: 27px; padding: 0 6px; text-align: left; font-weight: 400; color: #4c607a; border-right: 1px solid #e5e5e5; position: relative; }
th:first-child { padding-left: 17px; }
.sort { position: absolute; width: 8px; height: 8px; left: 138px; top: 0; }
tbody::before { content: ""; display: block; height: 6px; }
td { height: 21px; padding: 0 6px; color: #6d6d6d; white-space: nowrap; }
td:first-child { display: flex; align-items: center; gap: 4px; padding-left: 18px; color: #000; }
td:last-child { text-align: right; }
.hscroll { display: flex; height: 15px; margin-bottom: 1px; background: #f0f0f0; }
.highlight { position: absolute; left: 3px; top: -3px; width: 123px; height: 243px; border: 5px solid #ed1c24; border-radius: 3px; pointer-events: none; }

.footer { position: relative; background: #f0f0f0; padding: 11px 17px 13px 12px; }
.row { display: flex; align-items: center; gap: 12px; }
.row label { width: 175px; margin-right: -7px; text-align: right; }
.combo { flex: 1; display: flex; align-items: center; height: 26px; background: #fff; border: 1px solid #0078d7; padding: 0 3px 0 2px; }
.combo input { flex: 1; min-width: 0; border: 0; outline: 0; padding: 0; background: none; }
.combo input::selection { background: #0078d7; color: #fff; }
.filter { position: relative; width: 188px; height: 24px; }
.filter select { appearance: none; width: 100%; height: 100%; border: 1px solid #adadad; border-radius: 0; background: #e1e1e1; padding: 0 20px 0 3px; }
.filter svg { position: absolute; right: 3px; top: 6px; }
.actions { justify-content: flex-end; gap: 14px; margin-top: 5px; padding-right: 1px; }
.actions button { width: 86px; height: 25px; background: #e1e1e1; border: 1px solid #adadad; }
.actions .primary { border: 2px solid #0078d7; }
.resize { position: absolute; right: 1px; bottom: 0; width: 10px; height: 10px; }
```
FILE: app.js
```js
const filename = document.getElementById("filename");
filename.focus();
filename.select();
```
